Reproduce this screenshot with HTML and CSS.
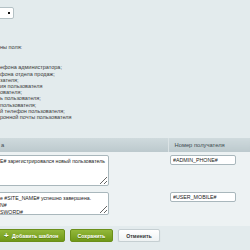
FILE: index.html
```html
<!DOCTYPE html>
<html lang="ru">
<head>
    <meta charset="UTF-8">
    <title>SMS шаблоны</title>
    <link rel="stylesheet" href="styles.css">
</head>
<body>

<div class="top">
    <div class="select"><span class="arrow"></span></div>
</div>

<div class="notes">
    <p class="lead">ны поля:</p>
    <ul class="macros">
        <li>ефона администратора;</li>
        <li>фона отдела продаж;</li>
        <li>зателя;</li>
        <li>ия пользователя</li>
        <li>ователя;</li>
        <li>ь пользователя;</li>
        <li>пользователя;</li>
        <li>й телефон пользователя;</li>
        <li>ронной почты пользователя</li>
    </ul>
</div>

<table class="grid">
    <colgroup>
        <col class="col-text">
        <col class="col-phone">
    </colgroup>
    <thead>
        <tr>
            <th>а</th>
            <th class="sep">Номер получателя</th>
        </tr>
    </thead>
    <tbody>
        <tr>
            <td><textarea class="msg tall" wrap="off">E# зарегистрировался новый пользователь</textarea></td>
            <td class="phone-cell"><input class="phone" type="text" value="#ADMIN_PHONE#"></td>
        </tr>
        <tr>
            <td class="last"><textarea class="msg" wrap="off">е #SITE_NAME# успешно завершена.
N#
SWORD#</textarea></td>
            <td class="phone-cell last"><input class="phone" type="text" value="#USER_MOBILE#"></td>
        </tr>
    </tbody>
</table>

<div class="buttons">
    <button class="btn green add"><span class="plus">+</span> Добавить шаблон</button>
    <button class="btn green">Сохранить</button>
    <button class="btn plain">Отменить</button>
</div>

</body>
</html>
```

FILE: styles.css
```css
body {
    margin: 0;
    background-color: #e3ebed;
    font-family: "Liberation Sans", Arial, sans-serif;
    font-size: 5.5px;
    color: #3a3a3a;
    overflow: hidden;
}
.top { padding-top: 7px; }
.select {
    position: relative;
    width: 40px;
    height: 10px;
    margin-left: -28px;
    background: #fff;
    border: 1px solid #b4c1c5;
    border-radius: 2px;
}
.arrow {
    position: absolute;
    right: 3px;
    top: 4px;
    width: 2px;
    height: 2px;
    background: #111;
}
.notes { margin-top: 25px; }
.lead { margin: 0; line-height: 6.4px; }
.macros {
    list-style: none;
    margin: 14px 0 0;
    padding: 0;
    line-height: 6.2px;
}
.grid {
    margin-top: 18px;
    border-collapse: collapse;
    width: 250px;
    table-layout: fixed;
}
.col-text { width: 168px; }
.col-phone { width: 82px; }
.grid th {
    height: 14px;
    padding: 0 0 0 1px;
    text-align: left;
    font-weight: normal;
    font-size: 5.8px;
    color: #3d4b50;
    background: linear-gradient(#cfdadd, #bcc9cd);
}
.grid th.sep {
    padding-left: 6px;
    border-left: 1px solid #dbe3e5;
}
.grid td {
    background: #edf2f3;
    vertical-align: top;
    padding: 3px 0 3px;
}
.grid td.phone-cell { padding-left: 2px; }
.grid td.last { padding-bottom: 11px; }
.msg {
    display: block;
    box-sizing: border-box;
    width: 114px;
    height: 23px;
    margin: 0 0 0 -5px;
    padding: 2px 3px 2px 4px;
    border: 1px solid #a9b7bc;
    border-radius: 2px;
    background: #fff;
    font-family: "Liberation Sans", Arial, sans-serif;
    font-size: 5.2px;
    line-height: 7px;
    color: #222;
    resize: vertical;
    overflow: hidden;
}
.msg.tall { height: 31px; }
.phone {
    display: block;
    box-sizing: border-box;
    width: 66px;
    height: 10px;
    padding: 0 2px;
    border: 1px solid #a9b7bc;
    border-radius: 2px;
    background: #fff;
    font-family: "Liberation Sans", Arial, sans-serif;
    font-size: 5.3px;
    color: #222;
}
.buttons {
    display: flex;
    gap: 5px;
    padding-top: 3px;
    margin-left: -2px;
}
.btn {
    height: 13px;
    padding: 0 7px;
    border-radius: 2px;
    white-space: nowrap;
    font-family: "Liberation Sans", Arial, sans-serif;
    font-size: 5.2px;
    font-weight: bold;
}
.btn.add { padding: 0 5px; }
.btn.green {
    color: #fff;
    border: 1px solid #6b8f1a;
    background: linear-gradient(#93b83a, #6f9818);
    text-shadow: 0 1px 0 #5a7d10;
}
.plus { font-size: 8px; margin-right: 2px; }
.btn.plain {
    color: #333;
    border: 1px solid #c5cfd2;
    background: linear-gradient(#ffffff, #eef2f3);
    box-shadow: 0 1px 1px rgba(0,0,0,0.15);
}
```
